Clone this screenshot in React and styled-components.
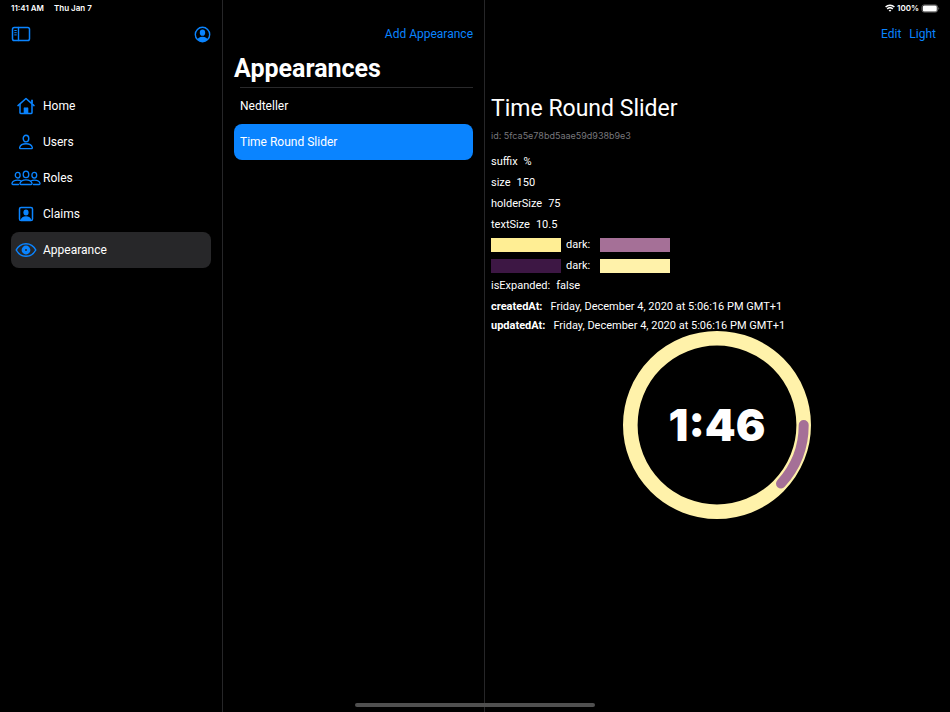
import React, { useState } from "react";
import styled, { createGlobalStyle, css } from "styled-components";

const blue = "#0a84ff";

const GlobalStyle = createGlobalStyle`
  *, *::before, *::after { box-sizing: border-box; }
  body {
    margin: 0;
    background: #000;
    color: #fff;
    font-family: Roboto, "Liberation Sans", sans-serif;
    font-size: 12px;
    line-height: 15px;
  }
  button { font: inherit; border: 0; padding: 0; margin: 0; background: none; color: ${blue}; cursor: pointer; }
  h1, h2, p, ul, dl, dt, dd { margin: 0; padding: 0; }
  ul { list-style: none; }
  svg { display: block; }
`;

const Layout = styled.div`
  display: grid;
  grid-template-columns: 223px 262px minmax(0, 1fr);
  min-height: 100vh;
`;

const columnBase = css`
  display: flex;
  flex-direction: column;
  min-width: 0;
`;

const Sidebar = styled.nav`
  ${columnBase}
  padding: 0 11px;
  border-right: 1px solid #262628;
`;

const ListColumn = styled.section`
  ${columnBase}
  padding: 0 11px;
  border-right: 1px solid #262628;
`;

const DetailColumn = styled.main`
  ${columnBase}
  padding: 0 7px 0 6px;
`;

const StatusBar = styled.div`
  display: flex;
  align-items: center;
  justify-content: ${(p) => (p.$end ? "flex-end" : "flex-start")};
  gap: ${(p) => (p.$end ? "2px" : "10px")};
  height: 16px;
  padding-right: ${(p) => (p.$end ? "3px" : "0")};
  font-family: Inter, sans-serif;
  font-size: 8px;
  font-weight: 600;
  line-height: 16px;
`;

const Toolbar = styled.header`
  display: flex;
  align-items: center;
  justify-content: ${(p) => (p.$spread ? "space-between" : "flex-end")};
  gap: 8px;
  height: 36px;
  padding-right: ${(p) => (p.$inset ? "7px" : "0")};
`;

const TextButton = styled.button`
  font-size: 12px;
  line-height: 16px;
`;

const NavList = styled.ul`
  margin-top: 36px;
`;

const NavItem = styled.button`
  display: grid;
  grid-template-columns: 30px 1fr;
  gap: 2px;
  align-items: center;
  justify-items: center;
  width: 100%;
  height: 36px;
  border-radius: 8px;
  background: ${(p) => (p.$active ? "#272729" : "transparent")};
`;

const NavLabel = styled.span`
  justify-self: start;
  color: #fff;
`;

const ListTitle = styled.h1`
  font-size: 25px;
  font-weight: 700;
  line-height: 34px;
  height: 35px;
`;

const Divider = styled.div`
  height: 1px;
  margin-left: 6px;
  background: #29292b;
`;

const ListItem = styled.button`
  width: 100%;
  height: 36px;
  padding: 0 6px;
  border-radius: 8px;
  color: #fff;
  text-align: left;
  background: ${(p) => (p.$active ? blue : "transparent")};
`;

const DetailTitle = styled.h2`
  margin-top: 42px;
  font-size: 23px;
  font-weight: 400;
  line-height: 30px;
`;

const Identifier = styled.p`
  margin-top: 4px;
  color: #77777b;
  font-family: Inter, sans-serif;
  font-size: 9px;
  line-height: 15px;
`;

const Properties = styled.dl`
  display: flex;
  flex-direction: column;
  gap: ${(p) => (p.$tight ? "4px" : "6px")};
  margin-top: ${(p) => p.$top}px;
  font-size: 11px;
`;

const Property = styled.div`
  display: flex;
  align-items: center;
  gap: 6px;
  height: 15px;
  white-space: nowrap;
`;

const SwatchRow = styled(Property)`
  gap: 5px;
`;

const Stamp = styled(Property)`
  gap: 8px;
`;

const StampName = styled.dt`
  font-weight: 700;
`;

const Swatch = styled.dd`
  width: 70px;
  height: 14px;
  background: ${(p) => p.$color};
`;

const SwatchLabel = styled.dt`
  width: 29px;
`;

const Dial = styled.div`
  display: grid;
  place-items: center;
  align-self: center;
  margin-top: -3px;
`;

const DialRing = styled.svg`
  grid-area: 1 / 1;
`;

const DialValue = styled.output`
  grid-area: 1 / 1;
  font-family: Inter, sans-serif;
  font-size: 44px;
  font-weight: 900;
  line-height: 48px;
`;

const HomeIndicator = styled.div`
  position: fixed;
  bottom: 5px;
  left: 50%;
  width: 240px;
  height: 4px;
  margin-left: -120px;
  border-radius: 2px;
  background: #505050;
`;

const stroke = { fill: "none", stroke: blue, strokeWidth: 1.4, strokeLinecap: "round", strokeLinejoin: "round" };

const SidebarIcon = () => (
  <svg width="20" height="16" viewBox="0 0 20 16" {...stroke}>
    <rect x="1.5" y="1.5" width="17" height="13" rx="1.8" strokeWidth="1.5" />
    <path d="M7.5 1.5v13" />
    <path d="M3.700 4.500h1.600M3.700 6.700h1.600M3.700 8.900h1.600" strokeWidth="1" />
  </svg>
);

const AccountIcon = () => (
  <svg width="17" height="17" viewBox="0 0 17 17">
    <clipPath id="account-clip"><circle cx="8.5" cy="8.5" r="7" /></clipPath>
    <circle cx="8.5" cy="8.5" r="7.200" fill="none" stroke={blue} strokeWidth="1.400" />
    <ellipse cx="8.5" cy="6.700" rx="2.700" ry="3.100" fill={blue} />
    <ellipse cx="8.5" cy="14.600" rx="5.600" ry="3.800" fill={blue} clipPath="url(#account-clip)" />
  </svg>
);

const HomeIcon = () => (
  <svg width="18" height="18" viewBox="0 0 18 18" {...stroke}>
    <path d="M1 8.600 9 1.500l8 7.100" strokeWidth="1.500" />
    <path d="M3 7.500v8.200a.7.7 0 0 0 .7.7h10.600a.7.7 0 0 0 .7-.7V7.500" strokeWidth="1.500" />
    <path d="M15 2.700v3.700" strokeWidth="1.800" strokeLinecap="butt" />
    <path d="M7 16v-5.200h4V16z" fill={blue} strokeWidth=".6" />
  </svg>
);

const UserIcon = () => (
  <svg width="16" height="16" viewBox="0 0 16 16" {...stroke}>
    <ellipse cx="8" cy="4.600" rx="2.800" ry="3.300" />
    <path d="M2.700 14.600c-.8 0-1.200-.5-1-1.200.6-2 3.100-3.600 6.300-3.600s5.700 1.600 6.300 3.600c.2.7-.2 1.200-1 1.200z" />
  </svg>
);

const GroupIcon = () => (
  <svg width="30" height="16" viewBox="0 0 30 16" {...stroke} strokeWidth="1.300">
    <ellipse cx="15" cy="4.400" rx="2.800" ry="3.200" />
    <path d="M10 14.500c-.8 0-1.200-.5-1-1.200.6-2 2.900-3.500 6-3.500s5.400 1.500 6 3.500c.2.7-.2 1.200-1 1.200z" />
    <ellipse cx="6.700" cy="5.200" rx="2.400" ry="2.800" />
    <ellipse cx="23.300" cy="5.200" rx="2.400" ry="2.800" />
    <path d="M7.500 14.500H2c-.8 0-1.200-.5-1-1.200.5-1.900 2.600-3.200 5.500-3.200 1.500 0 2.700.3 3.700.9M22.500 14.500H28c.8 0 1.200-.5 1-1.200-.5-1.900-2.600-3.200-5.500-3.200-1.500 0-2.700.3-3.700.9" />
  </svg>
);

const ClaimsIcon = () => (
  <svg width="16" height="16" viewBox="0 0 16 16">
    <rect x="1.500" y="1.500" width="13" height="13" rx="1.600" fill="none" stroke={blue} strokeWidth="1.500" />
    <ellipse cx="8" cy="6.400" rx="2.600" ry="3" fill={blue} />
    <path d="M2.600 14c.4-2.400 2.600-3.800 5.400-3.800s5 1.400 5.400 3.800z" fill={blue} />
  </svg>
);

const EyeIcon = () => (
  <svg width="22" height="16" viewBox="0 0 22 16">
    <path d="M1.200 8C3.200 4.300 6.800 1.700 11 1.700s7.800 2.600 9.800 6.300c-2 3.700-5.600 6.300-9.800 6.300S3.200 11.700 1.200 8z" fill="none" stroke={blue} strokeWidth="1.500" strokeLinejoin="round" />
    <circle cx="11" cy="8" r="2.700" fill="none" stroke={blue} strokeWidth="3.400" />
  </svg>
);

const WifiIcon = () => (
  <svg width="10" height="8" viewBox="0 0 10 8" fill="none" stroke="#fff" strokeWidth="1.500">
    <path d="M.6 3C3.100.6 6.900.6 9.400 3M2.200 4.900c1.600-1.500 4-1.500 5.600 0" />
    <path d="M5 7.800 3.600 6.300c.8-.8 2-.8 2.800 0z" fill="#fff" stroke="none" />
  </svg>
);

const BatteryIcon = () => (
  <svg width="19" height="9" viewBox="0 0 19 9">
    <rect x=".9" y=".9" width="15.700" height="7.200" rx="2.200" fill="none" stroke="#777" strokeWidth=".8" />
    <rect x="1.800" y="1.600" width="14" height="5.800" rx="1.500" fill="#fff" />
    <path d="M17.500 3.200v2.600c.9-.3.900-2.300 0-2.600z" fill="#888" />
  </svg>
);

const navItems = [
  ["Home", HomeIcon],
  ["Users", UserIcon],
  ["Roles", GroupIcon],
  ["Claims", ClaimsIcon],
  ["Appearance", EyeIcon],
];

const appearances = ["Nedteller", "Time Round Slider"];

const settings = [
  ["suffix", "%"],
  ["size", "150"],
  ["holderSize", "75"],
  ["textSize", "10.5"],
];

const palettes = [
  ["#ffee94", "#a57097"],
  ["#3d1744", "#fff2aa"],
];

const stamps = [
  ["createdAt:", "Friday, December 4, 2020 at 5:06:16 PM GMT+1"],
  ["updatedAt:", "Friday, December 4, 2020 at 5:06:16 PM GMT+1"],
];

export default function App() {
  const [section, setSection] = useState("Appearance");
  const [selected, setSelected] = useState("Time Round Slider");

  return (
    <>
      <GlobalStyle />
      <Layout>
        <Sidebar>
          <StatusBar><span>11:41 AM</span><span>Thu Jan 7</span></StatusBar>
          <Toolbar $spread>
            <button type="button" aria-label="Toggle sidebar"><SidebarIcon /></button>
            <button type="button" aria-label="Account"><AccountIcon /></button>
          </Toolbar>
          <NavList>
            {navItems.map(([label, Icon]) => (
              <li key={label}>
                <NavItem type="button" $active={label === section} onClick={() => setSection(label)}>
                  <Icon />
                  <NavLabel>{label}</NavLabel>
                </NavItem>
              </li>
            ))}
          </NavList>
        </Sidebar>

        <ListColumn>
          <StatusBar />
          <Toolbar><TextButton type="button">Add Appearance</TextButton></Toolbar>
          <ListTitle>Appearances</ListTitle>
          <Divider />
          <ul>
            {appearances.map((name) => (
              <li key={name}>
                <ListItem type="button" $active={name === selected} onClick={() => setSelected(name)}>
                  {name}
                </ListItem>
              </li>
            ))}
          </ul>
        </ListColumn>

        <DetailColumn>
          <StatusBar $end><WifiIcon /><span>100%</span><BatteryIcon /></StatusBar>
          <Toolbar $inset>
            <TextButton type="button">Edit</TextButton>
            <TextButton type="button">Light</TextButton>
          </Toolbar>
          <DetailTitle>Time Round Slider</DetailTitle>
          <Identifier>id: 5fca5e78bd5aae59d938b9e3</Identifier>
          <Properties $top={11}>
            {settings.map(([name, value]) => (
              <Property key={name}><dt>{name}</dt><dd>{value}</dd></Property>
            ))}
          </Properties>
          <Properties $top={5}>
            {palettes.map(([light, dark]) => (
              <SwatchRow key={light}>
                <Swatch $color={light} />
                <SwatchLabel>dark:</SwatchLabel>
                <Swatch $color={dark} />
              </SwatchRow>
            ))}
          </Properties>
          <Properties $top={5}>
            <Property><dt>isExpanded:</dt><dd>false</dd></Property>
          </Properties>
          <Properties $tight $top={6}>
            {stamps.map(([name, value]) => (
              <Stamp key={name}><StampName>{name}</StampName><dd>{value}</dd></Stamp>
            ))}
          </Properties>
          <Dial>
            <DialRing width="190" height="190" viewBox="0 0 190 190" fill="none" aria-hidden="true">
              <circle cx="95" cy="95" r="86.700" stroke="#fff2aa" strokeWidth="14.600" />
              <path d="M181.700 95A86.700 86.700 0 0 1 159 153.500" stroke="#a57097" strokeWidth="10" strokeLinecap="round" />
            </DialRing>
            <DialValue>1:46</DialValue>
          </Dial>
        </DetailColumn>
      </Layout>
      <HomeIndicator />
    </>
  );
}
